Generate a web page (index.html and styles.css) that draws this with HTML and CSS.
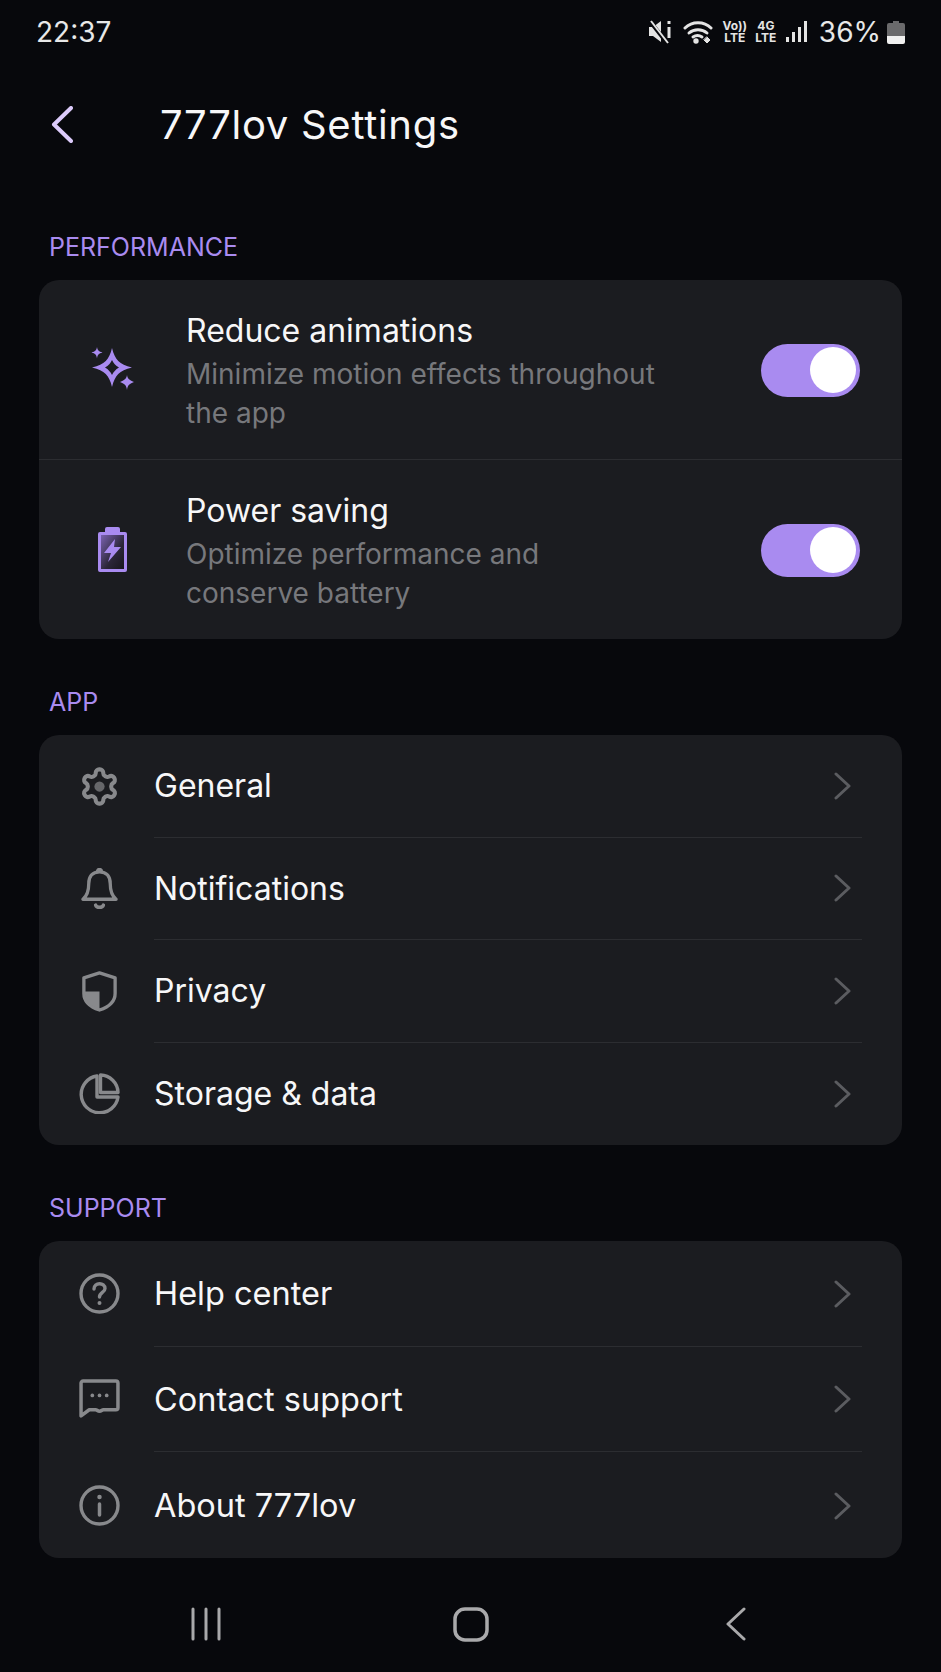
FILE: index.html
```html
<!DOCTYPE html>
<html lang="en">
<head>
    <meta charset="UTF-8">
    <title>777lov Settings</title>
    <link rel="stylesheet" href="styles.css">
</head>
<body>
    <div class="status">
        <span class="time">22:37</span>
        <div class="status-icons">
            <svg class="ic-mute" viewBox="0 0 24 24"><path d="M1 7h4l8-6v21l-8-6H1z" fill="#e4e4e4"/><path d="M1 0l18 23" stroke="#07080c" stroke-width="4"/><path d="M3 1l17 22" stroke="#e4e4e4" stroke-width="2"/><path d="M21 1v3M21 7v11" stroke="#e4e4e4" stroke-width="3"/></svg>
            <svg class="ic-wifi" viewBox="0 0 31 24" fill="none" stroke="#e4e4e4" stroke-width="3" stroke-linecap="round"><path d="M2 8c7-7 19-7 26 0"/><path d="M6 13c5-4.500 13-4.500 18 0"/><path d="M10 17c3-2 6-2 9 0"/><circle cx="13" cy="21" r="1.200" fill="#e4e4e4"/><path d="M21 20l3 3 3-3-3-3z" fill="#e4e4e4" stroke-width="1"/></svg>
            <span class="net"><span>Vo))</span><span>LTE</span></span>
            <span class="net"><span>4G</span><span>LTE</span></span>
            <svg class="ic-signal" viewBox="0 0 22 24" fill="#e4e4e4"><rect x="0" y="17" width="3" height="5"/><rect x="6" y="12" width="3" height="10"/><rect x="12" y="7" width="3" height="15"/><rect x="18" y="1" width="3" height="21"/></svg>
            <span class="pct">36%</span>
            <svg class="ic-batt" viewBox="0 0 18 24"><path d="M6 1h6v2h4a2 2 0 0 1 2 2v11H0V5a2 2 0 0 1 2-2h4z" fill="#6a6a6c"/><path d="M0 16h18v6a2 2 0 0 1-2 2H2a2 2 0 0 1-2-2z" fill="#f0f0f0"/></svg>
        </div>
    </div>

    <header class="header">
        <svg class="back" viewBox="0 0 22 37" fill="none" stroke="#dccbfb" stroke-width="4" stroke-linecap="round" stroke-linejoin="round"><path d="M20 2L3 18.500 20 35"/></svg>
        <h1>777lov Settings</h1>
    </header>

    <main>
        <section>
            <h2>PERFORMANCE</h2>
            <div class="card card-perf">
                <div class="toggle-row">
                    <div class="toggle-icon">
                        <svg class="icon" viewBox="0 0 44 44" fill="#a98bf0"><path fill-rule="evenodd" d="M21 1C24 13 28 17 41 20.500 28 24 24 28 21 40 18 28 14 24 1 20.500 14 17 18 13 21 1zM21 13C19.500 16 17.500 18.500 14 20.500 17.500 22.500 19.500 25 21 28 22.500 25 24.500 22.500 28 20.500 24.500 18.500 22.500 16 21 13z"/><path d="M6 0c.500 3 1.500 4.500 5.500 5.500-4 1-5 2.500-5.500 6-.500-3.500-1.500-5-5.500-6 4-1 5-2.500 5.500-5.500z"/><path d="M36 28c.500 3.500 2 5 7 7-5 2-6.500 3.500-7 8-.500-4.500-2-6-7-8 5-2 6.500-3.500 7-7z"/></svg>
                    </div>
                    <div class="toggle-text">
                        <div class="toggle-title">Reduce animations</div>
                        <div class="toggle-sub">Minimize motion effects throughout the app</div>
                    </div>
                    <div class="switch"><span class="knob"></span></div>
                </div>
                <div class="toggle-row">
                    <div class="toggle-icon">
                        <svg class="icon icon-batt" viewBox="0 0 29 45"><defs><linearGradient id="battFill" x1="0" y1="0" x2="1" y2="1"><stop offset="0" stop-color="#7a62b0"/><stop offset="0.6" stop-color="#2b2638"/><stop offset="1" stop-color="#17161c"/></linearGradient></defs><path d="M9 0h11a2 2 0 0 1 2 2v3h5a2 2 0 0 1 2 2v36a2 2 0 0 1-2 2H2a2 2 0 0 1-2-2V7a2 2 0 0 1 2-2h5V2a2 2 0 0 1 2-2z" fill="#a98bf0"/><rect x="3" y="8" width="23" height="34" fill="url(#battFill)"/><path d="M17 12L6 26h7l-3 9 13-15h-7z" fill="#a98bf0"/></svg>
                    </div>
                    <div class="toggle-text">
                        <div class="toggle-title">Power saving</div>
                        <div class="toggle-sub sub-narrow">Optimize performance and conserve battery</div>
                    </div>
                    <div class="switch"><span class="knob"></span></div>
                </div>
            </div>
        </section>

        <section>
            <h2>APP</h2>
            <div class="card card-app">
                <div class="row">
                    <div class="row-icon">
                        <svg class="icon" viewBox="0 0 24 24" fill="none" stroke="#88898c" stroke-width="2.400"><path d="M12.220 2h-.44a2 2 0 0 0-2 2v.18a2 2 0 0 1-1 1.730l-.43.25a2 2 0 0 1-2 0l-.15-.08a2 2 0 0 0-2.730.73l-.22.38a2 2 0 0 0 .73 2.730l.15.1a2 2 0 0 1 1 1.720v.51a2 2 0 0 1-1 1.740l-.15.09a2 2 0 0 0-.73 2.730l.22.38a2 2 0 0 0 2.730.73l.15-.08a2 2 0 0 1 2 0l.43.25a2 2 0 0 1 1 1.730V20a2 2 0 0 0 2 2h.44a2 2 0 0 0 2-2v-.18a2 2 0 0 1 1-1.730l.43-.25a2 2 0 0 1 2 0l.15.08a2 2 0 0 0 2.730-.73l.22-.39a2 2 0 0 0-.73-2.730l-.15-.08a2 2 0 0 1-1-1.740v-.5a2 2 0 0 1 1-1.740l.15-.09a2 2 0 0 0 .73-2.730l-.22-.38a2 2 0 0 0-2.730-.73l-.15.08a2 2 0 0 1-2 0l-.43-.25a2 2 0 0 1-1-1.730V4a2 2 0 0 0-2-2z"/><circle cx="12" cy="12" r="3" fill="#66676a" stroke="none"/></svg>
                    </div>
                    <div class="row-body"><span>General</span><svg class="chev" viewBox="0 0 17 28"><path d="M2 2l13 12L2 26"/></svg></div>
                </div>
                <div class="row">
                    <div class="row-icon">
                        <svg class="icon" viewBox="0 0 40 42" fill="none" stroke="#88898c" stroke-width="3.400" stroke-linecap="round" stroke-linejoin="round"><path d="M20 4c-7.500 0-11 5-11 12 0 9-2 13-6 16h34c-4-3-6-7-6-16 0-7-3.500-12-11-12z"/><path d="M18 3.500a2 2 0 0 1 4 0"/><path d="M16 38c1 3 7 3 8 0" stroke-width="3.500"/></svg>
                    </div>
                    <div class="row-body"><span>Notifications</span><svg class="chev" viewBox="0 0 17 28"><path d="M2 2l13 12L2 26"/></svg></div>
                </div>
                <div class="row">
                    <div class="row-icon">
                        <svg class="icon" viewBox="0 0 36 42"><path d="M18 2l16 5v16c0 9-7 14-16 17C9 37 2 32 2 23V7z" fill="none" stroke="#88898c" stroke-width="3.400" stroke-linejoin="round"/><path d="M18 21H3v2c0 8 6 13 15 16z" fill="#88898c"/></svg>
                    </div>
                    <div class="row-body"><span>Privacy</span><svg class="chev" viewBox="0 0 17 28"><path d="M2 2l13 12L2 26"/></svg></div>
                </div>
                <div class="row">
                    <div class="row-icon">
                        <svg class="icon" viewBox="0 0 41 41" fill="none" stroke="#88898c" stroke-width="3.400" stroke-linejoin="round"><path d="M39 24a18.500 18.500 0 1 1-21-21v21z" stroke-linecap="round"/><path d="M21.500 2a18 18 0 0 1 17.500 17.500H21.500z"/></svg>
                    </div>
                    <div class="row-body"><span>Storage &amp; data</span><svg class="chev" viewBox="0 0 17 28"><path d="M2 2l13 12L2 26"/></svg></div>
                </div>
            </div>
        </section>

        <section>
            <h2>SUPPORT</h2>
            <div class="card card-support">
                <div class="row">
                    <div class="row-icon">
                        <svg class="icon" viewBox="0 0 41 41" fill="none" stroke="#88898c" stroke-width="3.400" stroke-linecap="round"><circle cx="20.500" cy="20.500" r="18.500"/><path d="M15 16c0-7 11-7 11-.5 0 4-5.500 4-5.500 8.500"/><circle cx="20.500" cy="30" r="1" fill="#88898c" stroke-width="2"/></svg>
                    </div>
                    <div class="row-body"><span>Help center</span><svg class="chev" viewBox="0 0 17 28"><path d="M2 2l13 12L2 26"/></svg></div>
                </div>
                <div class="row">
                    <div class="row-icon">
                        <svg class="icon" viewBox="0 0 40 40" fill="none" stroke="#88898c" stroke-width="3.400" stroke-linejoin="round"><path d="M2 36V4a2 2 0 0 1 2-2h32a2 2 0 0 1 2 2v24a2 2 0 0 1-2 2H24c-2 0-2 1.500-4 1.500S18 30 16 30h-6z"/><g fill="#88898c" stroke="none"><circle cx="13" cy="16" r="1.800"/><circle cx="20" cy="16" r="1.800"/><circle cx="27" cy="16" r="1.800"/></g></svg>
                    </div>
                    <div class="row-body"><span>Contact support</span><svg class="chev" viewBox="0 0 17 28"><path d="M2 2l13 12L2 26"/></svg></div>
                </div>
                <div class="row">
                    <div class="row-icon">
                        <svg class="icon" viewBox="0 0 41 41" fill="none" stroke="#88898c" stroke-width="3.400" stroke-linecap="round"><circle cx="20.500" cy="20.500" r="18.500"/><path d="M20.500 19v11" stroke-width="3.500"/><circle cx="20.500" cy="12" r="1" fill="#88898c" stroke-width="2.500"/></svg>
                    </div>
                    <div class="row-body"><span>About 777lov</span><svg class="chev" viewBox="0 0 17 28"><path d="M2 2l13 12L2 26"/></svg></div>
                </div>
            </div>
        </section>
    </main>

    <nav class="navbar">
        <svg class="nav-menu" viewBox="0 0 32 34" stroke="#a9a9ab" stroke-width="3" stroke-linecap="round"><path d="M3 2v30M16 2v30M29 2v30"/></svg>
        <svg class="nav-home" viewBox="0 0 36 35" fill="none" stroke="#a9a9ab" stroke-width="3.500"><rect x="2" y="2" width="32" height="31" rx="10"/></svg>
        <svg class="nav-back" viewBox="0 0 20 34" fill="none" stroke="#a9a9ab" stroke-width="3" stroke-linecap="round" stroke-linejoin="round"><path d="M18 2L2 17l16 15"/></svg>
    </nav>
</body>
</html>
```

FILE: styles.css
```css
* {
    box-sizing: border-box;
}

body {
    margin: 0;
    height: 1672px;
    overflow: hidden;
    background: #07080c;
    color: #f7f7f8;
    font-family: Inter, "Liberation Sans", sans-serif;
}

/* status bar */
.status {
    display: flex;
    justify-content: space-between;
    align-items: center;
    height: 64px;
    padding: 0 36px;
}

.time {
    font-size: 28px;
    color: #e8e8e8;
}

.status-icons {
    display: flex;
    align-items: center;
}

.ic-mute {
    width: 24px;
    height: 26px;
    margin-right: 11px;
}

.ic-wifi {
    width: 31px;
    height: 24px;
    margin-right: 10px;
}

.net {
    display: flex;
    flex-direction: column;
    align-items: center;
    width: 22px;
    margin-right: 9px;
    font-size: 12px;
    line-height: 12px;
    font-weight: 700;
    color: #e4e4e4;
}

.ic-signal {
    width: 22px;
    height: 24px;
    margin-right: 11px;
}

.pct {
    font-size: 28px;
    color: #e8e8e8;
    margin-right: 6px;
}

.ic-batt {
    width: 18px;
    height: 24px;
}

/* header */
.header {
    display: flex;
    align-items: center;
    height: 120px;
    padding-left: 51px;
}

.back {
    width: 22px;
    height: 37px;
    margin-right: 87px;
}

h1 {
    margin: 0;
    font-size: 40px;
    letter-spacing: 0.7px;
    font-weight: 400;
}

/* sections */
main {
    padding: 0 39px;
}

h2 {
    margin: 48px 0 20px 10px;
    padding-top: 2px;
    font-size: 25px;
    line-height: 26px;
    font-weight: 400;
    color: #a98bf0;
}

.card {
    display: grid;
    grid-auto-rows: 1fr;
    background: #1b1c20;
    border-radius: 20px;
}

.card-perf {
    height: 359px;
}

.card-app {
    height: 410px;
}

.card-support {
    height: 317px;
}

/* toggle rows */
.toggle-row {
    display: flex;
    align-items: center;
    padding-right: 42px;
    border-bottom: 1px solid #2c2d31;
}

.toggle-row:last-child {
    border-bottom: none;
}

.toggle-icon {
    display: flex;
    justify-content: center;
    width: 147px;
}

.icon {
    width: 41px;
    height: 41px;
}

.toggle-icon .icon {
    width: 44px;
    height: 44px;
}

.toggle-icon .icon-batt {
    width: 29px;
    height: 45px;
}

.toggle-text {
    flex: 1;
    padding-top: 5px;
}

.toggle-title {
    font-size: 32px;
    line-height: 40px;
}

.toggle-sub {
    margin-top: 4px;
    max-width: 490px;
    font-size: 28px;
    line-height: 39px;
    color: #77787c;
}

.sub-narrow {
    max-width: 380px;
}

.switch {
    display: flex;
    justify-content: flex-end;
    align-items: center;
    width: 99px;
    height: 53px;
    margin-top: 2px;
    padding-right: 4px;
    border-radius: 27px;
    background: #a98bf0;
}

.knob {
    width: 46px;
    height: 46px;
    border-radius: 50%;
    background: #fff;
}

/* link rows */
.row {
    display: flex;
}

.row-icon {
    display: flex;
    justify-content: center;
    align-items: center;
    width: 115px;
    padding-left: 6px;
    padding-right: 1px;
}

.row-body {
    flex: 1;
    display: flex;
    justify-content: space-between;
    align-items: center;
    margin-right: 40px;
    padding-right: 11px;
    font-size: 32px;
    border-bottom: 1px solid #2c2d31;
}

.row:last-child .row-body {
    border-bottom: none;
}

.card-support .row-body {
    padding-top: 1px;
    font-size: 32.500px;
}

.chev {
    width: 17px;
    height: 28px;
    fill: none;
    stroke: #5b5c60;
    stroke-width: 3;
    stroke-linecap: round;
    stroke-linejoin: round;
}

/* android nav */
.navbar {
    display: flex;
    align-items: center;
    height: 114px;
    padding: 18px 0 0 190px;
}

.nav-menu {
    width: 32px;
    height: 34px;
    margin-right: 231px;
}

.nav-home {
    width: 36px;
    height: 35px;
    margin-right: 237px;
}

.nav-back {
    width: 20px;
    height: 34px;
}
```
